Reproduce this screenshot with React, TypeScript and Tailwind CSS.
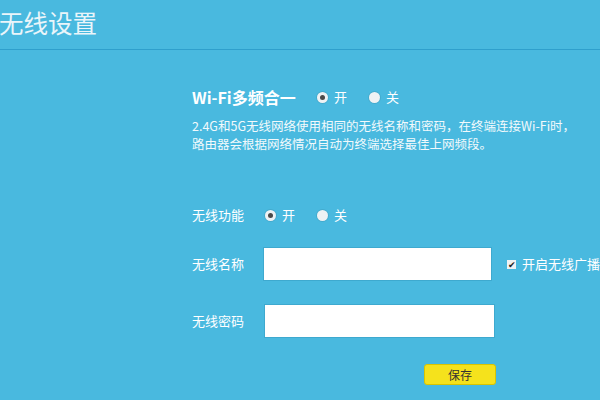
import React from "react";

function Radio({ checked }: { checked?: boolean }) {
  return (
    <span className="flex h-[11px] w-[11px] items-center justify-center rounded-full bg-[#eef2f4] shadow-[0_0_0_1px_rgba(0,0,0,0.08)]">
      {checked && <span className="h-[5px] w-[5px] rounded-full bg-[#4a4a4a]" />}
    </span>
  );
}

function RadioGroup({ value }: { value: "on" | "off" }) {
  return (
    <div className="flex items-center text-[13px] text-white">
      <Radio checked={value === "on"} />
      <span className="ml-[6px]">开</span>
      <span className="ml-[22px]">
        <Radio checked={value === "off"} />
      </span>
      <span className="ml-[6px]">关</span>
    </div>
  );
}

export default function App() {
  return (
    <div
      className="h-[400px] w-[600px] overflow-hidden bg-[#49b9df] text-white"
      style={{ fontFamily: '"Noto Sans CJK SC", "Noto Sans", sans-serif' }}
    >
      <div className="flex h-[50px] items-center border-b border-[#2f9fcc] pb-[2px]">
        <h1 className="-ml-[1px] text-[24.5px] leading-none text-[#eaf5fa]">无线设置</h1>
      </div>

      <div className="flex flex-col pl-[192px] pt-[36px]">
        <div className="flex h-[22px] items-center">
          <span className="w-[125px] text-[16px] font-bold">Wi-Fi多频合一</span>
          <RadioGroup value="on" />
        </div>

        <div className="mt-[9px] flex flex-col whitespace-nowrap text-[12.5px] leading-[18px] text-[#f2f9fc]">
          <span>2.4G和5G无线网络使用相同的无线名称和密码，在终端连接Wi-Fi时，</span>
          <span>路由器会根据网络情况自动为终端选择最佳上网频段。</span>
        </div>

        <div className="mt-[52px] flex h-[20px] items-center">
          <span className="w-[73px] text-[13px]">无线功能</span>
          <RadioGroup value="on" />
        </div>

        <div className="mt-[23px] flex items-center">
          <span className="w-[72px] text-[13px]">无线名称</span>
          <div className="h-[32px] w-[229px] bg-white shadow-[0_0_0_1px_rgba(0,80,120,0.15)]" />
          <span className="ml-[16px] flex h-[9px] w-[9px] items-center justify-center bg-[#eef1f3] text-[9px] leading-none text-[#222]">
            ✔
          </span>
          <span className="ml-[6px] whitespace-nowrap text-[13px]">开启无线广播</span>
        </div>

        <div className="mt-[25px] flex items-center">
          <span className="w-[73px] text-[13px]">无线密码</span>
          <div className="h-[32px] w-[229px] bg-white shadow-[0_0_0_1px_rgba(0,80,120,0.15)]" />
        </div>

        <div className="mt-[27px] flex pl-[232px]">
          <button className="h-[21px] w-[72px] rounded-[3px] border border-[#d9c400] bg-[#f5e21c] text-[12px] leading-none text-[#333]">
            保存
          </button>
        </div>
      </div>
    </div>
  );
}
